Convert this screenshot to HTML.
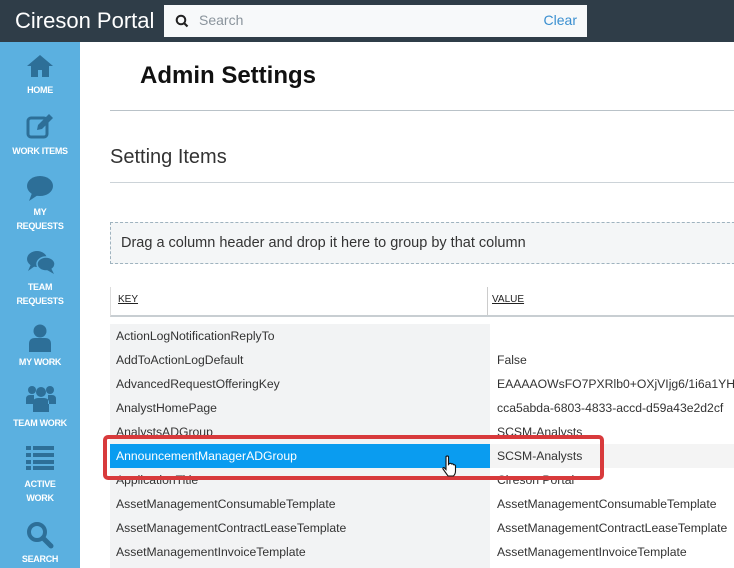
<!DOCTYPE html>
<html><head><style>
*{margin:0;padding:0;box-sizing:border-box}
body{width:734px;height:568px;overflow:hidden;background:#fff;font-family:"Liberation Sans",sans-serif;position:relative}
.top{position:absolute;left:0;top:0;width:734px;height:42px;background:#2f3d48}
.brand{position:absolute;left:15px;top:8px;color:#fff;font-size:22px}
.search{position:absolute;left:164px;top:5px;width:423px;height:32px;background:#f7f9fa}
.search span{position:absolute;top:7px;font-size:14px}
.side{position:absolute;left:0;top:42px;width:80px;height:526px;background:#5bb0e0}
.side .l{position:absolute;width:80px;text-align:center;color:#fff;font-size:9px;font-weight:bold;line-height:14px;letter-spacing:-.3px}
.side svg{position:absolute;left:26px}
.h1{position:absolute;left:140px;top:62px;font-size:24px;font-weight:bold;color:#111}
.hr{position:absolute;left:110px;width:624px;height:1px;background:#b9c2c8}
.h2{position:absolute;left:110px;top:146px;font-size:20px;color:#333}
.drop{position:absolute;left:110px;top:222px;width:640px;height:42px;border:1px dashed #9fb3bf;background:#f4f6f7;font-size:14.5px;color:#333;padding:12px 10px}
.th{position:absolute;top:287px;left:110px;width:630px;height:30px;border-bottom:2px solid #c8ced2;border-left:1px solid #ddd}
.th span{position:absolute;top:7px;font-size:10px;text-decoration:underline;color:#222}
.keycol{position:absolute;left:110px;top:324px;width:380px;height:244px;background:#f2f3f4}
.row{position:absolute;left:110px;width:624px;height:24px;font-size:12.2px;color:#333}
.row .k{position:absolute;left:6px;top:5px}
.row .v{position:absolute;left:387px;top:5px}
</style></head><body>
<div class="top"><div class="brand">Cireson Portal</div>
<div class="search">
<svg style="position:absolute;left:11px;top:9px" width="14" height="14" viewBox="0 0 14 14"><circle cx="6" cy="6" r="4.3" fill="none" stroke="#222" stroke-width="2"/><path d="M9 9l3.5 3.5" stroke="#222" stroke-width="2.2"/></svg>
<span style="left:35px;color:#8a949c">Search</span><span style="right:10px;color:#3a8fd0">Clear</span></div></div>
<div class="side">
<svg style="top:12px" width="28" height="24" viewBox="0 0 28 24"><path d="M14 1L1 12h4v11h7v-7h4v7h7V12h4z" fill="#2d6f98"/></svg>
<div class="l" style="top:41px">HOME</div>
<svg style="top:71px" width="28" height="26" viewBox="0 0 28 26"><rect x="2" y="5" width="19" height="19" rx="3" fill="none" stroke="#2d6f98" stroke-width="3"/><path d="M11 17l1-5 11-11 4 4-11 11z" fill="#2d6f98"/></svg>
<div class="l" style="top:102px">WORK ITEMS</div>
<svg style="top:134px" width="28" height="26" viewBox="0 0 28 26"><ellipse cx="14" cy="10" rx="13" ry="10" fill="#2d6f98"/><path d="M6 17L3 25l9-6z" fill="#2d6f98"/></svg>
<div class="l" style="top:163px">MY<br>REQUESTS</div>
<svg style="top:208px" width="30" height="26" viewBox="0 0 30 26"><ellipse cx="11" cy="9" rx="10" ry="8" fill="#2d6f98"/><path d="M5 14l-3 7 7-5z" fill="#2d6f98"/><ellipse cx="20" cy="14" rx="9" ry="7" fill="#2d6f98" stroke="#5bb0e0" stroke-width="1.5"/><path d="M25 18l3 6-7-4z" fill="#2d6f98"/></svg>
<div class="l" style="top:238px">TEAM<br>REQUESTS</div>
<svg style="top:282px" width="28" height="28" viewBox="0 0 28 28"><circle cx="14" cy="7" r="6.5" fill="#2d6f98"/><path d="M3 28v-8q0-6 6-6h10q6 0 6 6v8z" fill="#2d6f98"/></svg>
<div class="l" style="top:313px">MY WORK</div>
<svg style="top:342px" width="30" height="28" viewBox="0 0 30 28"><circle cx="6" cy="6" r="4" fill="#2d6f98"/><circle cx="24" cy="6" r="4" fill="#2d6f98"/><circle cx="15" cy="8" r="5" fill="#2d6f98"/><path d="M0 20v-5q0-4 4-4h4v9zM30 20v-5q0-4-4-4h-4v9zM7 28v-9q0-5 5-5h6q5 0 5 5v9z" fill="#2d6f98"/></svg>
<div class="l" style="top:374px">TEAM WORK</div>
<svg style="top:404px" width="28" height="24" viewBox="0 0 28 24"><g fill="#2d6f98"><rect x="0" y="0" width="5" height="4"/><rect x="7" y="0" width="21" height="4"/><rect x="0" y="7" width="5" height="4"/><rect x="7" y="7" width="21" height="4"/><rect x="0" y="14" width="5" height="4"/><rect x="7" y="14" width="21" height="4"/><rect x="0" y="20" width="5" height="4"/><rect x="7" y="20" width="21" height="4"/></g></svg>
<div class="l" style="top:435px">ACTIVE<br>WORK</div>
<svg style="top:479px" width="28" height="28" viewBox="0 0 28 28"><circle cx="11" cy="11" r="8" fill="none" stroke="#2d6f98" stroke-width="4"/><path d="M17 17l8 8" stroke="#2d6f98" stroke-width="5" stroke-linecap="round"/></svg>
<div class="l" style="top:510px">SEARCH</div>
</div>
<div class="h1">Admin Settings</div>
<div class="hr" style="top:110px"></div>
<div class="h2">Setting Items</div>
<div class="hr" style="top:182px;background:#ccd3d8"></div>
<div class="drop">Drag a column header and drop it here to group by that column</div>
<div class="th"><span style="left:7px">KEY</span><div style="position:absolute;left:376px;top:0;width:1px;height:28px;background:#ccc"></div><span style="left:381px">VALUE</span></div>
<div class="keycol"></div>
<div class="row" style="top:324px"><span class="k">ActionLogNotificationReplyTo</span></div>
<div class="row" style="top:348px"><span class="k">AddToActionLogDefault</span><span class="v">False</span></div>
<div class="row" style="top:372px"><span class="k">AdvancedRequestOfferingKey</span><span class="v">EAAAAOWsFO7PXRlb0+OXjVIjg6/1i6a1YH6</span></div>
<div class="row" style="top:396px"><span class="k">AnalystHomePage</span><span class="v">cca5abda-6803-4833-accd-d59a43e2d2cf</span></div>
<div class="row" style="top:420px"><span class="k">AnalystsADGroup</span><span class="v">SCSM-Analysts</span></div>
<div class="row" style="top:444px;background:#f4f4f4"><div style="position:absolute;left:0;top:0;width:380px;height:24px;background:#0a9cf0"></div><span class="k" style="color:#fff">AnnouncementManagerADGroup</span><span class="v">SCSM-Analysts</span></div>
<div class="row" style="top:468px"><span class="k">ApplicationTitle</span><span class="v">Cireson Portal</span></div>
<div class="row" style="top:492px"><span class="k">AssetManagementConsumableTemplate</span><span class="v">AssetManagementConsumableTemplate</span></div>
<div class="row" style="top:516px"><span class="k">AssetManagementContractLeaseTemplate</span><span class="v">AssetManagementContractLeaseTemplate</span></div>
<div class="row" style="top:540px"><span class="k">AssetManagementInvoiceTemplate</span><span class="v">AssetManagementInvoiceTemplate</span></div>
<div style="position:absolute;left:103px;top:435px;width:501px;height:45px;border:4px solid #d83a3c;border-radius:5px"></div>
<svg style="position:absolute;left:441px;top:455px" width="18" height="22" viewBox="0 0 18 22"><path d="M5 1.5q1.5-1 2.5 0v8l1-1q1.5-.5 2 .5 1.5-.5 2 .7 1.5-.3 2 1V16q0 3-2 5H7L2 14q-.5-1.5 1-1.5l2 2z" fill="#fff" stroke="#111" stroke-width="1.1"/></svg>
</body></html>
